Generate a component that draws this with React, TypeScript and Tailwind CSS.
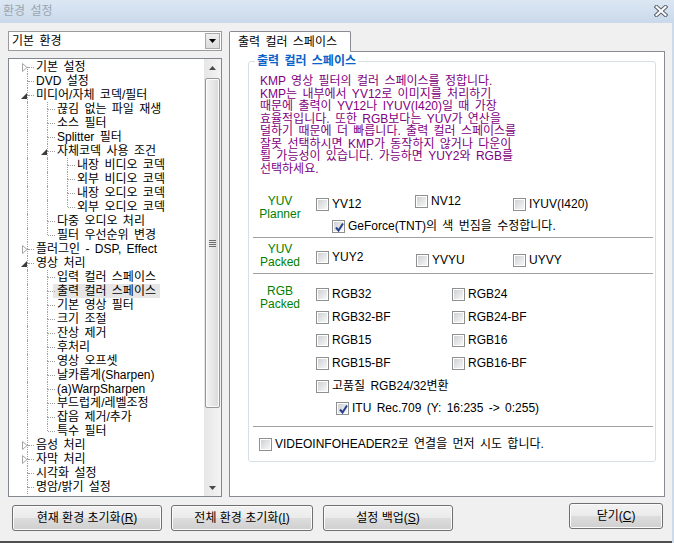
import React from 'react';

type Row = [number, '' | 'c' | 'e', string, boolean?];

const rows: Row[] = [
    [0, 'c', '기본 설정'],
    [0, '', 'DVD 설정'],
    [0, 'e', '미디어/자체 코덱/필터'],
    [1, '', '끊김 없는 파일 재생'],
    [1, '', '소스 필터'],
    [1, '', 'Splitter 필터'],
    [1, 'e', '자체코덱 사용 조건'],
    [2, '', '내장 비디오 코덱'],
    [2, '', '외부 비디오 코덱'],
    [2, '', '내장 오디오 코덱'],
    [2, '', '외부 오디오 코덱'],
    [1, '', '다중 오디오 처리'],
    [1, '', '필터 우선순위 변경'],
    [0, 'c', '플러그인 - DSP, Effect'],
    [0, 'e', '영상 처리'],
    [1, '', '입력 컬러 스페이스'],
    [1, '', '출력 컬러 스페이스', true],
    [1, '', '기본 영상 필터'],
    [1, '', '크기 조절'],
    [1, '', '잔상 제거'],
    [1, '', '후처리'],
    [1, '', '영상 오프셋'],
    [1, '', '날카롭게(Sharpen)'],
    [1, '', '(a)WarpSharpen'],
    [1, '', '부드럽게/레벨조정'],
    [1, '', '잡음 제거/추가'],
    [1, '', '특수 필터'],
    [0, 'c', '음성 처리'],
    [0, 'c', '자막 처리'],
    [0, '', '시각화 설정'],
    [0, '', '명암/밝기 설정'],
];

const lineX = ['left-[18px]', 'left-[38px]', 'left-[58px]'];
const hLine = ['left-[19px] w-[6px]', 'left-[39px] w-[7px]', 'left-[59px] w-[7px]'];
const padL = ['pl-[27px]', 'pl-[48px]', 'pl-[68px]'];
const expC = ['left-[13px]', 'left-[33px]', 'left-[53px]'];
const expE = ['left-[12px]', 'left-[32px]', 'left-[52px]'];

// true when a later sibling on level k follows row i
function continues(i: number, k: number) {
    for (let j = i + 1; j < rows.length; j++) {
        if (rows[j][0] < k) return false;
        if (rows[j][0] === k) return true;
    }
    return k === 0;
}

const dot = 'absolute border-l border-dotted border-[#a0a0a0]';

function TreeRow({ row, i }: { row: Row; i: number }) {
    const [level, exp, text, selected] = row;
    const lines = [];
    for (let k = 0; k < level; k++) {
        if (continues(i, k)) lines.push(<span key={k} className={`${dot} top-0 bottom-0 ${lineX[k]}`} />);
    }
    return (
        <div className={`relative h-[14px] leading-[14px] whitespace-nowrap ${padL[level]}`}>
            {lines}
            {i > 0 && <span className={`${dot} top-0 h-[7px] ${lineX[level]}`} />}
            {continues(i, level) && <span className={`${dot} top-[7px] bottom-0 ${lineX[level]}`} />}
            <span className={`absolute top-[7px] h-0 border-t border-dotted border-[#a0a0a0] ${hLine[level]}`} />
            {exp === 'c' && (
                <svg width="6" height="9" className={`absolute top-[3px] ${expC[level]}`}>
                    <path d="M0.5 0.5 L5 4.5 L0.5 8.5 Z" fill="white" stroke="#a6a6a6" />
                </svg>
            )}
            {exp === 'e' && (
                <svg width="6" height="6" className={`absolute top-[5px] ${expE[level]}`}>
                    <path d="M6 0 L6 6 L0 6 Z" fill="#3c3c3c" />
                </svg>
            )}
            <span className={selected ? 'inline-block bg-[#e6e6e6] -ml-[4px] px-[4px]' : 'inline-block'}>{text}</span>
        </div>
    );
}

function Check({ label, checked, className = '' }: { label: string; checked?: boolean; className?: string }) {
    return (
        <div className={`flex items-center h-[13px] gap-[3px] whitespace-nowrap ${className}`}>
            <span className="relative w-[13px] h-[13px] shrink-0 border border-[#8e8f8f] bg-white p-[1px]">
                <span className="block w-full h-full bg-linear-to-br from-[#cfd1d4] to-[#f7f7f7]" />
                {checked && (
                    <svg width="11" height="11" className="absolute left-[1px] top-[1px]">
                        <path d="M2 5.5 L4.5 8.5 L9 1.5" fill="none" stroke="#27408b" strokeWidth="2" />
                    </svg>
                )}
            </span>
            <span className="leading-[13px]">{label}</span>
        </div>
    );
}

function GroupLabel({ a, b, className = '' }: { a: string; b: string; className?: string }) {
    return (
        <div className={`w-[54px] shrink-0 text-center text-[#008000] leading-[13px] ${className}`}>
            <div>{a}</div>
            <div>{b}</div>
        </div>
    );
}

function Btn({ children, className = '' }: { children: React.ReactNode; className?: string }) {
    return (
        <button className={`h-[26px] rounded-[3px] border border-[#707070] bg-[linear-gradient(to_bottom,#f2f2f2_0%,#ebebeb_50%,#dddddd_51%,#cfcfcf_100%)] shadow-[inset_0_0_0_1px_#fbfbfb] text-[12px] text-black ${className}`}>
            {children}
        </button>
    );
}

const desc = [
    'KMP 영상 필터의 컬러 스페이스를 정합니다.',
    'KMP는 내부에서 YV12로 이미지를 처리하기',
    '때문에 출력이 YV12나 IYUV(I420)일 때 가장',
    '효율적입니다. 또한 RGB보다는 YUV가 연산을',
    '덜하기 때문에 더 빠릅니다. 출력 컬러 스페이스를',
    '잘못 선택하시면 KMP가 동작하지 않거나 다운이',
    '될 가능성이 있습니다. 가능하면 YUY2와 RGB를',
    '선택하세요.',
];

export default function App() {
    return (
        <div className="w-[674px] h-[543px] bg-[#ccdaea] flex flex-col overflow-hidden font-['Liberation_Sans','Noto_Sans_CJK_KR',sans-serif] text-[12px] text-black [word-spacing:2px]">
            {/* title bar */}
            <div className="h-[23px] shrink-0 flex items-start bg-linear-to-b from-[#dce7f3] to-[#c9d9eb]">
                <span className="pl-[3px] pt-[4px] text-[#9ba5b0] leading-[14px]">환경 설정</span>
                <svg width="14" height="12" className="ml-auto mr-[6px] mt-[5px]">
                    <path d="M2.5 2 L11.5 10 M11.5 2 L2.5 10" stroke="#5f6670" strokeWidth="4.2" strokeLinecap="square" />
                    <path d="M2.5 2 L11.5 10 M11.5 2 L2.5 10" stroke="#ffffff" strokeWidth="2" strokeLinecap="square" />
                </svg>
            </div>

            <div className="flex-1 flex flex-col bg-[#f0f0f0] mr-[2px] border-b-2 border-[#4f4f4f]">
                <div className="flex pt-[8px] pl-[8px]">
                    {/* left column */}
                    <div className="w-[214px] flex flex-col">
                        <div className="h-[20px] flex items-center bg-white border border-[#9a9a9a]">
                            <span className="pl-[3px] leading-[14px]">기본 환경</span>
                            <span className="ml-auto mr-[1px] w-[15px] h-[16px] border border-[#a9a9a9] bg-linear-to-b from-[#f0f0f0] to-[#dcdcdc] flex items-center justify-center">
                                <svg width="7" height="4">
                                    <path d="M0 0 L7 0 L3.5 4 Z" fill="#000" />
                                </svg>
                            </span>
                        </div>
                        <div className="mt-[7px] h-[439px] flex bg-white border border-[#828790] overflow-hidden">
                            <div className="flex-1 pt-[1px] overflow-hidden">
                                {rows.map((r, i) => (
                                    <TreeRow key={i} row={r} i={i} />
                                ))}
                            </div>
                            <div className="w-[17px] shrink-0 flex flex-col items-center bg-linear-to-r from-[#e6e6e6] to-[#f4f4f4]">
                                <div className="h-[17px] flex items-center justify-center">
                                    <svg width="7" height="4">
                                        <path d="M0 4 L7 4 L3.5 0 Z" fill="#4a4a4a" />
                                    </svg>
                                </div>
                                <div className="mt-[2px] w-[15px] h-[330px] rounded-[2px] border border-[#979797] bg-linear-to-r from-[#f4f4f4] to-[#dadada] shadow-[inset_0_0_0_1px_#fbfbfb] flex flex-col items-center justify-center gap-[1px]">
                                    <span className="w-[7px] h-px bg-[#6e6e6e]" />
                                    <span className="w-[7px] h-px bg-[#6e6e6e]" />
                                    <span className="w-[7px] h-px bg-[#6e6e6e]" />
                                    <span className="w-[7px] h-px bg-[#6e6e6e]" />
                                </div>
                                <div className="mt-auto h-[17px] flex items-center justify-center">
                                    <svg width="7" height="4">
                                        <path d="M0 0 L7 0 L3.5 4 Z" fill="#4a4a4a" />
                                    </svg>
                                </div>
                            </div>
                        </div>
                    </div>

                    {/* right column: tab */}
                    <div className="ml-[7px] w-[436px] flex flex-col">
                        <div className="flex h-[20px]">
                            <div className="relative z-10 h-[21px] w-[122px] pl-[8px] bg-white border border-b-0 border-[#898c95] rounded-t-[2px] leading-[20px] whitespace-nowrap">
                                출력 컬러 스페이스
                            </div>
                        </div>
                        <div className="h-[446px] bg-white border border-[#898c95] pl-[18px]">
                            <fieldset className="mt-[2px] w-[408px] h-[408px] border border-[#d5dfe5] rounded-[3px]">
                                <legend className="ml-[6px] px-[2px] font-bold text-[#0a62c8] leading-[14px]">출력 컬러 스페이스</legend>

                                <div className="mt-[7px] pl-[11px] text-[#800080] leading-[12.5px] whitespace-nowrap">
                                    {desc.map((d, i) => (
                                        <div key={i}>{d}</div>
                                    ))}
                                </div>

                                {/* YUV Planner */}
                                <div className="mt-[20px] h-[42px] flex pl-[4px]">
                                    <GroupLabel a="YUV" b="Planner" />
                                    <div className="ml-[9px] flex flex-col">
                                        <div className="flex items-start">
                                            <Check label="YV12" className="w-[99px] mt-[3px]" />
                                            <Check label="NV12" className="w-[98px]" />
                                            <Check label="IYUV(I420)" className="mt-[3px]" />
                                        </div>
                                        <Check label="GeForce(TNT)의 색 번짐을 수정합니다." checked className="ml-[16px] mt-[9px]" />
                                    </div>
                                </div>
                                <div className="ml-[4px] mr-[2px] border-t border-[#a0a0a0]" />

                                {/* YUV Packed */}
                                <div className="h-[35px] flex pl-[4px]">
                                    <GroupLabel a="YUV" b="Packed" className="mt-[5px]" />
                                    <div className="ml-[9px] flex items-start">
                                        <Check label="YUY2" className="w-[100px] mt-[13px]" />
                                        <Check label="YVYU" className="w-[97px] mt-[16px]" />
                                        <Check label="UYVY" className="mt-[16px]" />
                                    </div>
                                </div>
                                <div className="ml-[4px] mr-[2px] border-t border-[#a0a0a0]" />

                                {/* RGB Packed */}
                                <div className="h-[152px] flex pl-[4px]">
                                    <GroupLabel a="RGB" b="Packed" className="mt-[11px]" />
                                    <div className="ml-[9px] mt-[14px] flex flex-col">
                                        <div className="flex flex-col gap-[10px]">
                                            <div className="flex">
                                                <Check label="RGB32" className="w-[136px]" />
                                                <Check label="RGB24" />
                                            </div>
                                            <div className="flex">
                                                <Check label="RGB32-BF" className="w-[136px]" />
                                                <Check label="RGB24-BF" />
                                            </div>
                                            <div className="flex">
                                                <Check label="RGB15" className="w-[136px]" />
                                                <Check label="RGB16" />
                                            </div>
                                            <div className="flex">
                                                <Check label="RGB15-BF" className="w-[136px]" />
                                                <Check label="RGB16-BF" />
                                            </div>
                                            <Check label="고품질 RGB24/32변환" />
                                        </div>
                                        <Check label="ITU Rec.709 (Y: 16:235 -> 0:255)" checked className="ml-[20px] mt-[9px]" />
                                    </div>
                                </div>
                                <div className="ml-[4px] mr-[2px] border-t border-[#a0a0a0]" />

                                <Check label="VIDEOINFOHEADER2로 연결을 먼저 시도 합니다." className="ml-[10px] mt-[11px]" />
                            </fieldset>
                        </div>
                    </div>
                </div>

                {/* buttons */}
                <div className="flex items-start pl-[12px] pt-[8px]">
                    <Btn className="w-[150px]">
                        현재 환경 초기화(<u>R</u>)
                    </Btn>
                    <Btn className="w-[142px] ml-[9px]">
                        전체 환경 초기화(<u>I</u>)
                    </Btn>
                    <Btn className="w-[130px] ml-[10px]">
                        설정 백업(<u>S</u>)
                    </Btn>
                    <Btn className="w-[94px] ml-auto mr-[9px] -mt-[2px]">
                        닫기(<u>C</u>)
                    </Btn>
                </div>
            </div>
        </div>
    );
}
